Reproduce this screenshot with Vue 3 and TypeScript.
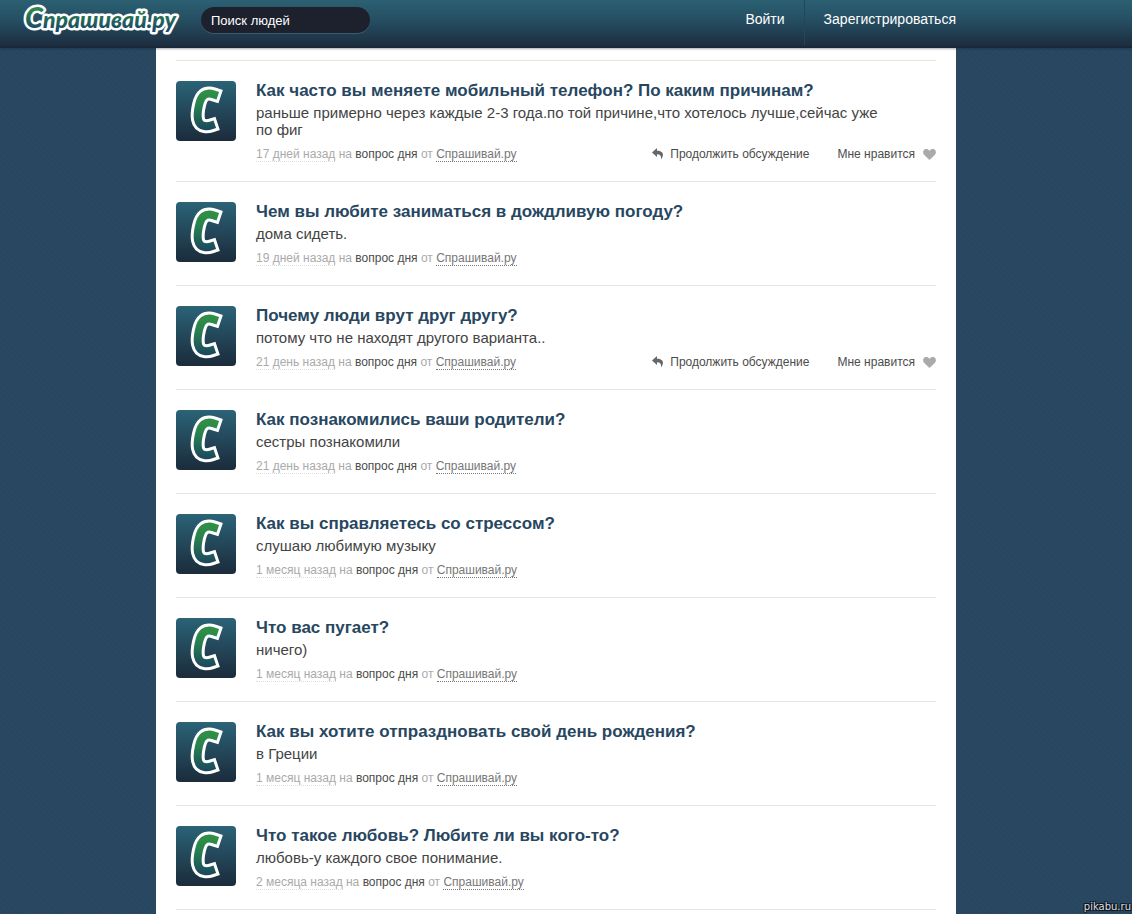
<script setup lang="ts">
import { ref } from 'vue'

interface Answer {
  question: string
  text: string
  time: string
  actions: boolean
}

const search = ref('')

const answers: Answer[] = [
  {
    question: 'Как часто вы меняете мобильный телефон? По каким причинам?',
    text: 'раньше примерно через каждые 2-3 года.по той причине,что хотелось лучше,сейчас уже по фиг',
    time: '17 дней назад',
    actions: true,
  },
  { question: 'Чем вы любите заниматься в дождливую погоду?', text: 'дома сидеть.', time: '19 дней назад', actions: false },
  { question: 'Почему люди врут друг другу?', text: 'потому что не находят другого варианта..', time: '21 день назад', actions: true },
  { question: 'Как познакомились ваши родители?', text: 'сестры познакомили', time: '21 день назад', actions: false },
  { question: 'Как вы справляетесь со стрессом?', text: 'слушаю любимую музыку', time: '1 месяц назад', actions: false },
  { question: 'Что вас пугает?', text: 'ничего)', time: '1 месяц назад', actions: false },
  { question: 'Как вы хотите отпраздновать свой день рождения?', text: 'в Греции', time: '1 месяц назад', actions: false },
  { question: 'Что такое любовь? Любите ли вы кого-то?', text: 'любовь-у каждого свое понимание.', time: '2 месяца назад', actions: false },
]
</script>

<template>
  <div class="page">
    <header class="header">
      <a href="#" class="logo" aria-label="Спрашивай.ру">
        <svg width="160" height="42" viewBox="0 0 160 42">
          <defs>
            <linearGradient id="logo-fill" x1="0" y1="0" x2="0" y2="1">
              <stop offset="0.2" stop-color="#2f9147" />
              <stop offset="0.85" stop-color="#1c4a66" />
            </linearGradient>
          </defs>
          <text class="logo-text" x="4" y="28" fill="url(#logo-fill)"><tspan class="logo-cap">С</tspan>прашивай.ру</text>
        </svg>
      </a>
      <form class="search" @submit.prevent>
        <input v-model="search" type="text" placeholder="Поиск людей" aria-label="Поиск людей" />
      </form>
      <nav class="nav">
        <a href="#">Войти</a>
        <a href="#">Зарегистрироваться</a>
      </nav>
    </header>

    <main class="content">
      <article v-for="(a, i) in answers" :key="i" class="answer">
        <a href="#" class="avatar" aria-label="Спрашивай.ру">
          <svg width="60" height="60" viewBox="0 0 60 60">
            <defs>
              <linearGradient :id="`letter-${i}`" gradientUnits="userSpaceOnUse" x1="0" y1="8" x2="0" y2="50">
                <stop offset="0.1" stop-color="#2f8f47" />
                <stop offset="0.4" stop-color="#27804f" />
                <stop offset="1" stop-color="#1b4560" />
              </linearGradient>
            </defs>
            <path class="letter-edge" d="M38 13.500C29 10.500 25 15 23 24C20.500 35 21 44 28.500 45C31.500 45.500 33.500 45 35 44.500" />
            <path
              class="letter-core"
              :stroke="`url(#letter-${i})`"
              d="M38 13.500C29 10.500 25 15 23 24C20.500 35 21 44 28.500 45C31.500 45.500 33.500 45 35 44.500"
            />
          </svg>
        </a>
        <div class="body">
          <h2><a href="#">{{ a.question }}</a></h2>
          <p class="text">{{ a.text }}</p>
          <div class="meta">
            <p class="source">
              <a href="#" class="time">{{ a.time }}</a> на <a href="#" class="topic">вопрос дня</a> от
              <a href="#" class="author">Спрашивай.ру</a>
            </p>
            <div v-if="a.actions" class="actions">
              <button type="button">
                <svg width="12" height="12" viewBox="0 0 12 12">
                  <path d="M5 0L0 4.500L5 9V6.200C8 6.200 9.500 7.500 9 11.500C12.500 7 11.500 3 5 2.800Z" fill="#666" />
                </svg>
                Продолжить обсуждение
              </button>
              <button type="button">
                Мне нравится
                <svg width="13" height="11" viewBox="0 0 13 11">
                  <path d="M6.500 11L1 5.800C-0.500 4 0 1.500 1.500 0.500C3.200 -0.500 5.500 0 6.500 2C7.500 0 9.800 -0.500 11.500 0.500C13 1.500 13.500 4 12 5.800Z" fill="#aaa" />
                </svg>
              </button>
            </div>
          </div>
        </div>
      </article>
    </main>
    <a href="#" class="watermark">pikabu.ru</a>
  </div>
</template>

<style>
body {
  margin: 0;
  background: #28475f;
}
</style>

<style scoped>
.page {
  height: 100vh;
  overflow: hidden;
  display: flex;
  flex-direction: column;
  font-family: "Liberation Sans", Arial, sans-serif;
  background: repeating-linear-gradient(45deg, #28465f 0 2px, #294962 2px 4px);
}
a {
  color: inherit;
  text-decoration: none;
}
.header {
  flex: none;
  display: flex;
  align-items: flex-start;
  height: 48px;
  padding: 0 176px 0 21px;
  box-sizing: border-box;
  background: linear-gradient(#2b6072, #264f63 40%, #1d2e40 95%, #192433);
  box-shadow: 0 1px 2px rgba(20, 35, 60, 0.4);
  position: relative;
}
.logo,
.logo svg {
  display: block;
}
.logo-text {
  font: italic 900 23px Lato, "Open Sans", sans-serif;
  stroke: #fff;
  stroke-width: 5px;
  stroke-linejoin: round;
  paint-order: stroke;
}
.logo-cap {
  font-size: 29px;
}
.search {
  margin: 7px 0 0 20px;
}
.search input {
  display: block;
  width: 169px;
  height: 26px;
  padding: 0 10px;
  box-sizing: border-box;
  border: 0;
  border-radius: 13px;
  outline: 0;
  background: #1d212e;
  box-shadow: 0 1px 0 #3b5b6c;
  color: #fff;
  font: 13px "Liberation Sans", Arial, sans-serif;
}
.search input::placeholder {
  color: #fff;
  opacity: 1;
}
.nav {
  display: flex;
  margin-left: auto;
  color: #fff;
  font-size: 14px;
  line-height: 38px;
}
.nav a {
  height: 45px;
}
.nav a + a {
  margin-left: 19px;
  padding-left: 19px;
  border-left: 1px solid #24465a;
}
.content {
  flex: 1;
  width: 760px;
  max-width: calc(100% - 60px);
  margin: 0 auto 0 calc((100% - 820px) / 2);
  padding: 12px 20px 0;
  background: #fff;
}
.answer {
  display: flex;
  gap: 20px;
  padding: 20px 0 19px;
  border-top: 1px solid #e5e5e5;
}
.answer:last-child {
  border-bottom: 1px solid #e5e5e5;
}
.avatar {
  flex: none;
  width: 60px;
  height: 60px;
  border-radius: 4px;
  background: linear-gradient(#2b6377, #1b2b3b);
}
.avatar svg {
  display: block;
}
.letter-edge,
.letter-core {
  fill: none;
  stroke-linejoin: round;
  stroke-linecap: square;
}
.letter-edge {
  stroke: #fff;
  stroke-width: 14px;
}
.letter-core {
  stroke-width: 8px;
}
.body {
  flex: 1;
  min-width: 0;
}
h2 {
  margin: 0 0 3px;
  color: #28475f;
  font-size: 17px;
  line-height: 20px;
}
.text {
  max-width: 636px;
  margin: 0 0 8px;
  color: #444;
  font-size: 15px;
  line-height: 17px;
}
.meta {
  display: flex;
  justify-content: space-between;
  height: 16px;
  font-size: 12px;
  line-height: 16px;
}
.source {
  margin: 0;
  color: #aaa;
}
.time {
  border-bottom: 1px dotted #ddd;
}
.topic {
  color: #4c4c4c;
}
.author {
  color: #777;
  border-bottom: 1px dotted #777;
}
.actions {
  display: flex;
  gap: 28px;
}
.actions button {
  display: flex;
  align-items: center;
  gap: 6px;
  height: 16px;
  padding: 0;
  border: 0;
  background: none;
  color: #4c4c4c;
  font: 12px/16px "Liberation Sans", Arial, sans-serif;
}
.actions button + button {
  gap: 8px;
}
.watermark {
  position: absolute;
  right: 0;
  bottom: 0;
  padding: 0 1px 1px;
  color: #d5dde5;
  text-shadow: 1px 1px 0 #111, -1px 1px 0 #111, 1px -1px 0 #111, -1px -1px 0 #111;
  font: 10px/13px "DejaVu Sans", sans-serif;
}
</style>
